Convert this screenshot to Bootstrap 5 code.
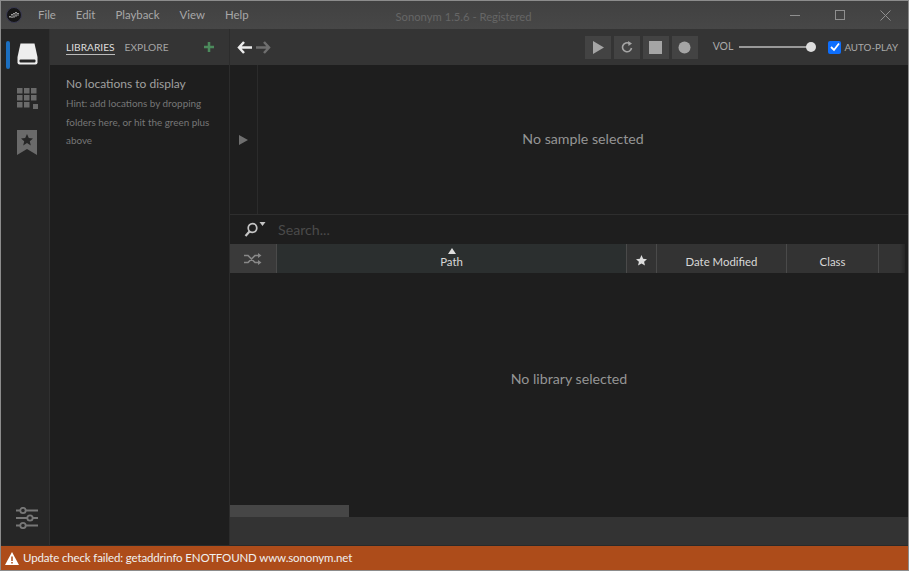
<!DOCTYPE html>
<html lang="en"><head><meta charset="utf-8"><title>Sononym</title>
<link href="https://cdn.jsdelivr.net/npm/bootstrap@5.3.0/dist/css/bootstrap.min.css" rel="stylesheet">
<style>
html,body{height:100%;margin:0;overflow:hidden;background:#1e1e1e}
body{font-family:Lato,"Noto Sans",sans-serif;font-size:12px;color:#aaa}
.app-win{height:571px;width:909px;border:1px solid #8c8c8c;background:#1e1e1e}
.title-bar{height:28px;background:linear-gradient(#414141,#474747);flex:none;position:relative}
.logo-box{width:26px}
.menu-row{margin-left:11px}
.menu-item{color:#a8a8a8;font-size:11.400px;margin-right:20px}
.win-title{position:absolute;left:0;right:0;top:8px;text-align:center;color:#666;font-size:11.250px;padding-left:18px}
.win-btns{position:absolute;right:0;top:0;height:28px}
.win-btn{width:45px;height:28px}
.rail-col{width:49px;background:#262626;border-right:1px solid #303030;flex:none;position:relative}
.rail-mark{position:absolute;left:5px;top:12px;width:4px;height:28px;border-radius:2px;background:#1c6fc0}
.rail-ico{height:44px;padding-left:4px}
.rail-first{margin-top:3px}
.side-panel{width:180px;background:#1e1e1e;border-right:1px solid #2c2c2c;flex:none}
.panel-tabs{height:36px;background:#343434;padding:0 15px 0 16px;font-size:10.200px;flex:none}
.tab-on{color:#ddd;border-bottom:1px solid #bbb;line-height:13px;margin-right:10px;margin-top:1px}
.tab-off{color:#a4a4a4;line-height:13px}
.panel-body{padding:10px 16px}
.empty-head{font-size:12px;color:#a0a0a0;line-height:18px}
.empty-hint{font-size:9.900px;color:#777;line-height:18.600px;margin-top:1px;white-space:nowrap}
.tool-bar{height:36px;background:#343434;flex:none;padding:0 10px 0 7px}
.tool-btn{width:26px;height:23px;background:#434343;margin-right:3px}
.vol-label{color:#aaa;font-size:10.500px;margin-left:12px}
.vol-track{width:72px;height:2px;background:#999;margin-left:6px;position:relative}
.vol-knob{position:absolute;right:-5px;top:-4px;width:10px;height:10px;border-radius:50%;background:#ddd}
.auto-box{width:13px;height:13px;background:#0d6efd;border-radius:2px;margin-left:17px;margin-right:3px}
.auto-label{font-size:9.800px;color:#aaa}
.wave-pane{height:150px;flex:none;border-bottom:1px solid #2e2e2e}
.wave-side{width:28px;border-right:1px solid #2b2b2b}
.empty-msg{color:#959595;font-size:14.200px}
.wave-msg{padding-bottom:2px}
.search-row{height:29px;flex:none;background:#1e1e1e;padding-left:14px}
.search-hint{color:#4a4a4a;font-size:14.200px;margin-left:12px}
.head-row{height:29px;flex:none;background:#333;color:#d8d8d8;font-size:11.400px;margin-right:3px}
.head-cell{border-right:1px solid #4a4a4a;height:100%;display:flex;align-items:flex-end;justify-content:center;padding-bottom:3px;position:relative}
.cell-shuffle{width:47px;background:#3a3a3a;align-items:center;padding:0}
.cell-path{width:350px;background:#2b2f2f}
.cell-star{width:30px;padding:4px 0 0;align-items:center}
.cell-date{width:130px}
.cell-class{width:92px}
.head-fade{background:linear-gradient(90deg,#333 80%,#262626)}
.sort-up{position:absolute;top:4px;left:50%;margin-left:-4px;width:0;height:0;border-left:4px solid transparent;border-right:4px solid transparent;border-bottom:6px solid #ddd}
.list-pane{min-height:0;padding-bottom:20px}
.scroll-row{height:12px;flex:none;background:#1e1e1e}
.scroll-thumb{width:119px;height:12px;background:#464646}
.foot-row{height:28px;flex:none;background:#333}
.status-bar{height:25px;flex:none;background:#ad4c1a;color:#f0f0f0;font-size:11.500px;letter-spacing:-.14px;padding-left:4px;border-top:1px solid #2a2a2a}
.main-pane{min-width:0}
</style></head>
<body>
<div class="app-win d-flex flex-column">
  <div class="title-bar d-flex align-items-center">
    <div class="logo-box d-flex justify-content-center">
      <svg width="16" height="16" viewBox="0 0 16 16"><circle cx="8" cy="8" r="7.500" fill="#161616" stroke="#3b3b52"/><path d="M4 9v2M6 7v4M8 6v5M10 5v5M12 6v3" stroke="#eee" stroke-width="1.200" stroke-dasharray="1 .6"/></svg>
    </div>
    <div class="d-flex menu-row">
      <span class="menu-item">File</span><span class="menu-item">Edit</span><span class="menu-item">Playback</span><span class="menu-item">View</span><span class="menu-item">Help</span>
    </div>
    <div class="win-title">Sononym 1.5.6 - Registered</div>
    <div class="win-btns d-flex">
      <div class="win-btn d-flex align-items-center justify-content-center"><svg width="11" height="11"><path d="M0 5.500h10" stroke="#8f8f8f"/></svg></div>
      <div class="win-btn d-flex align-items-center justify-content-center"><svg width="11" height="11"><rect x=".5" y=".5" width="9" height="9" fill="none" stroke="#8f8f8f"/></svg></div>
      <div class="win-btn d-flex align-items-center justify-content-center"><svg width="11" height="11"><path d="M.5 .5l10 10M10.500 .5l-10 10" stroke="#8f8f8f"/></svg></div>
    </div>
  </div>
  <div class="d-flex flex-grow-1" style="min-height:0">
    <div class="rail-col d-flex flex-column">
      <div class="rail-mark"></div>
      <div class="rail-ico rail-first d-flex align-items-center justify-content-center">
        <svg width="21" height="22" viewBox="0 0 21 22"><path d="M3.500 .5h14L20.500 14v5.500a2 2 0 0 1-2 2h-16a2 2 0 0 1-2-2V14z" fill="#eee"/><rect x="2.500" y="16.500" width="16" height="3" rx="1" fill="#262626"/></svg>
      </div>
      <div class="rail-ico d-flex align-items-center justify-content-center">
        <svg width="21" height="21" viewBox="0 0 21 21" fill="#6a6a6a"><rect x="0" y="0" width="5.500" height="5.500"/><rect x="7" y="0" width="5.500" height="5.500"/><rect x="14" y="0" width="5.500" height="5.500"/><rect x="0" y="7" width="5.500" height="5.500"/><rect x="7" y="7" width="5.500" height="5.500"/><rect x="14" y="7" width="5.500" height="5.500"/><rect x="0" y="14" width="5.500" height="5.500"/><rect x="7" y="14" width="5.500" height="5.500"/><rect x="16" y="16" width="5" height="5"/></svg>
      </div>
      <div class="rail-ico d-flex align-items-center justify-content-center">
        <svg width="20" height="25" viewBox="0 0 20 25"><path d="M0 0h20v25l-10-6-10 6z" fill="#6a6a6a"/><path d="M10 4l1.800 4 4.200.4-3.200 2.800 1 4.200-3.800-2.300-3.800 2.300 1-4.200L4 8.400 8.200 8z" fill="#262626"/></svg>
      </div>
      <div class="mt-auto d-flex justify-content-center" style="padding-left:3px;padding-bottom:16px">
        <svg width="22" height="22" viewBox="0 0 22 22" fill="none" stroke="#777" stroke-width="1.800"><path d="M0 3.500h4M10 3.500h12M0 11h11M17 11h5M0 18.500h4M10 18.500h12"/><circle cx="7" cy="3.500" r="2.700"/><circle cx="14" cy="11" r="2.700"/><circle cx="7" cy="18.500" r="2.700"/></svg>
      </div>
    </div>
    <div class="side-panel d-flex flex-column">
      <div class="panel-tabs d-flex align-items-center">
        <span class="tab-on">LIBRARIES</span><span class="tab-off">EXPLORE</span>
        <svg class="ms-auto" width="10" height="10"><path d="M5 0v10M0 5h10" stroke="#4c8a5c" stroke-width="2.500"/></svg>
      </div>
      <div class="panel-body">
        <div class="empty-head">No locations to display</div>
        <div class="empty-hint">Hint: add locations by dropping<br>folders here, or hit the green plus<br>above</div>
      </div>
    </div>
    <div class="main-pane flex-grow-1 d-flex flex-column">
      <div class="tool-bar d-flex align-items-center">
        <svg width="15" height="13" viewBox="0 0 15 13"><path d="M7 1L2 6.500 7 12M2 6.500h13" fill="none" stroke="#ececec" stroke-width="2.500"/></svg>
        <svg class="ms-1" width="15" height="13" viewBox="0 0 15 13"><path d="M8 1l5 5.500L8 12M13 6.500H0" fill="none" stroke="#6e6e6e" stroke-width="2.500"/></svg>
        <div class="ms-auto d-flex align-items-center">
          <div class="tool-btn d-flex align-items-center justify-content-center"><svg width="12" height="13"><path d="M1 0l11 6.500L1 13z" fill="#a5a5a5"/></svg></div>
          <div class="tool-btn d-flex align-items-center justify-content-center"><svg width="12" height="12" viewBox="0 0 12 12"><path d="M10.500 7a4.500 4.500 0 1 1-2-4.500" fill="none" stroke="#a5a5a5" stroke-width="1.600"/><path d="M7 0l4 2.500-3.500 2.500z" fill="#a5a5a5"/></svg></div>
          <div class="tool-btn d-flex align-items-center justify-content-center"><svg width="13" height="13"><rect width="13" height="13" fill="#a5a5a5"/></svg></div>
          <div class="tool-btn d-flex align-items-center justify-content-center"><svg width="13" height="13"><circle cx="6.500" cy="6.500" r="6" fill="#a5a5a5"/></svg></div>
          <span class="vol-label">VOL</span>
          <div class="vol-track"><div class="vol-knob"></div></div>
          <div class="auto-box d-flex align-items-center justify-content-center"><svg width="10" height="10" viewBox="0 0 10 10"><path d="M1 5l3 3 5-6.500" fill="none" stroke="#fff" stroke-width="1.800"/></svg></div>
          <span class="auto-label">AUTO-PLAY</span>
        </div>
      </div>
      <div class="wave-pane d-flex">
        <div class="wave-side d-flex align-items-center justify-content-center"><svg width="9" height="10"><path d="M0 0l9 5-9 5z" fill="#6f6f6f"/></svg></div>
        <div class="flex-grow-1 d-flex align-items-center justify-content-center empty-msg wave-msg">No sample selected</div>
      </div>
      <div class="search-row d-flex align-items-center">
        <svg width="22" height="16" viewBox="0 0 22 16"><circle cx="8.500" cy="6" r="4.300" fill="none" stroke="#c5c5c5" stroke-width="1.700"/><path d="M5.500 9.500l-4 4.500" stroke="#c5c5c5" stroke-width="2.200"/><path d="M15.500 0h6l-3 4z" fill="#c5c5c5"/></svg>
        <span class="search-hint">Search...</span>
      </div>
      <div class="head-row d-flex">
        <div class="head-cell cell-shuffle"><svg width="18" height="12" viewBox="0 0 18 12" fill="none" stroke="#888" stroke-width="1.700"><path d="M0 2.500h4l7 7h4M0 9.500h4l7-7h4"/><path d="M14 0l3.500 2.500L14 5zM14 7l3.500 2.500L14 12z" fill="#888" stroke="none"/></svg></div>
        <div class="head-cell cell-path"><span class="sort-up"></span>Path</div>
        <div class="head-cell cell-star"><svg width="11" height="11" viewBox="0 0 20 20"><path d="M10 0l3 7 7 .6-5.300 4.700 1.600 7L10 15.600 3.700 19.300l1.600-7L0 7.600 7 7z" fill="#ddd"/></svg></div>
        <div class="head-cell cell-date">Date Modified</div>
        <div class="head-cell cell-class">Class</div>
        <div class="flex-grow-1 head-fade"></div>
      </div>
      <div class="list-pane flex-grow-1 d-flex align-items-center justify-content-center empty-msg">No library selected</div>
      <div class="scroll-row"><div class="scroll-thumb"></div></div>
      <div class="foot-row"></div>
    </div>
  </div>
  <div class="status-bar d-flex align-items-center">
    <svg width="14" height="13" viewBox="0 0 14 13"><path d="M7 0l7 13H0z" fill="#fff"/><path d="M7 4.500v4.500M7 10v1.500" stroke="#ad4c1a" stroke-width="1.500"/></svg>
    <span class="ms-1">Update check failed: getaddrinfo ENOTFOUND www.sononym.net</span>
  </div>
</div>
<script src="https://cdn.jsdelivr.net/npm/bootstrap@5.3.0/dist/js/bootstrap.bundle.min.js"></script>
</body></html>
